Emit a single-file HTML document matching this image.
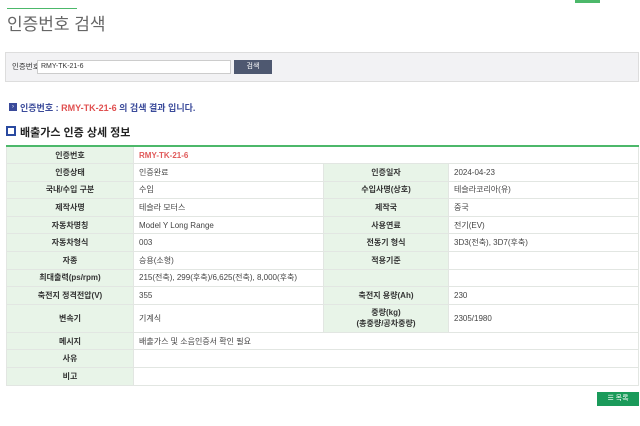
<!DOCTYPE html>
<html><head><meta charset="utf-8"><style>
*{margin:0;padding:0;box-sizing:border-box}
body{width:640px;height:426px;background:#fff;font-family:"Liberation Sans","Noto Sans CJK KR",sans-serif;font-size:8px;color:#333;position:relative;overflow:hidden}
.abs{position:absolute}
table{border-collapse:collapse;position:absolute;left:6px;top:145px;width:633px;border-top:2px solid #4cb86a}
td{border:1px solid #e2e6e2;height:17.6px;padding:0 5px;font-size:8px;color:#444}
td.l{background:#e8f4e8;text-align:center;font-weight:bold;color:#333;width:127px}
td.l2{width:125px}
td.v{width:190px}
</style></head><body>
<div class="abs" style="left:7px;top:8px;width:70px;height:1px;background:#4cb86a"></div>
<div class="abs" style="left:7px;top:10px;font-size:17px;color:#666">인증번호 검색</div>
<div class="abs" style="left:575px;top:0;width:25px;height:3px;background:#4cb86a"></div>
<div class="abs" style="left:5px;top:52px;width:634px;height:30px;background:#f2f2f4;border:1px solid #ddd"></div>
<div class="abs" style="left:12px;top:61px;font-size:7.5px;color:#333">인증번호</div>
<div class="abs" style="left:37px;top:60px;width:194px;height:14px;background:#fff;border:1px solid #ccc;font-size:7px;padding:2px 3px">RMY-TK-21-6</div>
<div class="abs" style="left:234px;top:60px;width:38px;height:14px;background:#4e5870;color:#fff;font-size:7px;text-align:center;line-height:14px">검색</div>
<div class="abs" style="left:9px;top:103px;width:8px;height:8px;background:#3a4a9a;color:#fff;font-size:6px;line-height:8px;text-align:center">›</div>
<div class="abs" style="left:20px;top:101px;font-size:9px;font-weight:bold;color:#3a4a9a">인증번호 : <span style="color:#e05050">RMY-TK-21-6</span> 의 검색 결과 입니다.</div>
<div class="abs" style="left:6px;top:126px;width:10px;height:10px;background:#2a4aa0;border:2px solid #2a4aa0"><div style="width:6px;height:6px;background:#fff"></div></div>
<div class="abs" style="left:20px;top:124px;font-size:11px;font-weight:bold;color:#222">배출가스 인증 상세 정보</div>
<table>
<tr><td class="l">인증번호</td><td colspan="3" style="color:#e05a5a;font-weight:bold">RMY-TK-21-6</td></tr>
<tr><td class="l">인증상태</td><td class="v">인증완료</td><td class="l l2">인증일자</td><td>2024-04-23</td></tr>
<tr><td class="l">국내/수입 구분</td><td class="v">수입</td><td class="l l2">수입사명(상호)</td><td>테슬라코리아(유)</td></tr>
<tr><td class="l">제작사명</td><td class="v">테슬라 모터스</td><td class="l l2">제작국</td><td>중국</td></tr>
<tr><td class="l">자동차명칭</td><td class="v">Model Y Long Range</td><td class="l l2">사용연료</td><td>전기(EV)</td></tr>
<tr><td class="l">자동차형식</td><td class="v">003</td><td class="l l2">전동기 형식</td><td>3D3(전축), 3D7(후축)</td></tr>
<tr><td class="l">자종</td><td class="v">승용(소형)</td><td class="l l2">적용기준</td><td></td></tr>
<tr><td class="l">최대출력(ps/rpm)</td><td class="v">215(전축), 299(후축)/6,625(전축), 8,000(후축)</td><td class="l l2"></td><td></td></tr>
<tr><td class="l">축전지 정격전압(V)</td><td class="v">355</td><td class="l l2">축전지 용량(Ah)</td><td>230</td></tr>
<tr><td class="l" style="height:28px">변속기</td><td class="v">기계식</td><td class="l l2">중량(kg)<br>(총중량/공차중량)</td><td>2305/1980</td></tr>
<tr><td class="l">메시지</td><td colspan="3">배출가스 및 소음인증서 확인 필요</td></tr>
<tr><td class="l">사유</td><td colspan="3"></td></tr>
<tr><td class="l">비고</td><td colspan="3"></td></tr>
</table>
<div class="abs" style="left:597px;top:392px;width:42px;height:14px;background:#1a9a5a;color:#fff;font-size:7px;text-align:center;line-height:14px">☰ 목록</div>
</body></html>
